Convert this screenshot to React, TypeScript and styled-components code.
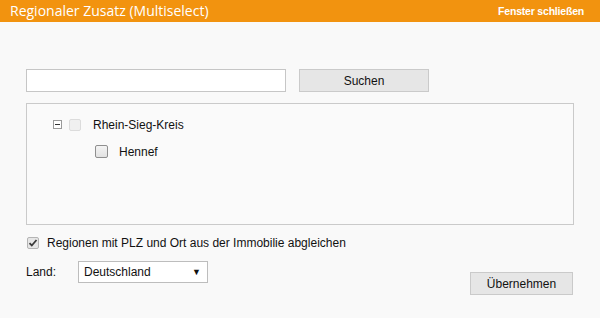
import React from "react";
import styled, { createGlobalStyle } from "styled-components";

const Global = createGlobalStyle`
  html, body { margin: 0; padding: 0; background: #f9f9f9; }
  body { font-family: "Liberation Sans", Arial, sans-serif; font-size: 12px; color: #111; }
`;

const Page = styled.div`
  width: 600px;
  height: 318px;
  background: #f9f9f9;
  display: flex;
  flex-direction: column;
`;

const Header = styled.div`
  height: 22px;
  background: #f2930f;
  display: flex;
  align-items: center;
  justify-content: space-between;
  padding: 0 16px 0 10px;
`;

const Title = styled.div`
  font-family: "Open Sans", sans-serif;
  font-size: 14px;
  color: #fff;
  line-height: 22px;
  margin-top: -1px;
`;

const Close = styled.div`
  font-family: "Liberation Sans", Arial, sans-serif;
  font-size: 10.5px;
  font-weight: bold;
  color: #fff;
  letter-spacing: -0.2px;
`;

const Body = styled.div`
  padding: 47px 27px 0 26px;
  display: flex;
  flex-direction: column;
`;

const SearchRow = styled.div`
  display: flex;
  gap: 13px;
  height: 23px;
`;

const TextInput = styled.div`
  width: 258px;
  height: 21px;
  background: #fff;
  border: 1px solid #c6c6c6;
`;

const Button = styled.div<{ $w: number }>`
  width: ${(p) => p.$w}px;
  height: 21px;
  box-sizing: content-box;
  background: #e6e6e6;
  border: 1px solid #cacaca;
  display: flex;
  align-items: center;
  justify-content: center;
  font-size: 12px;
  color: #111;
`;

const TreeBox = styled.div`
  margin-top: 11px;
  height: 108px;
  border: 1px solid #cacaca;
  background: #fafafa;
  padding: 12px 0 0 26px;
  box-sizing: content-box;
  width: 520px;
  display: flex;
  flex-direction: column;
  gap: 10px;
`;

const TreeRow = styled.div<{ $indent: number }>`
  display: flex;
  align-items: center;
  height: 17px;
  padding-left: ${(p) => p.$indent}px;
`;

const Toggle = styled.span`
  width: 7px;
  height: 7px;
  border: 1px solid #9a9a9a;
  background: #fff;
  position: relative;
  margin-right: 7px;
  &::after {
    content: "";
    position: absolute;
    left: 1px;
    top: 3px;
    width: 5px;
    height: 1px;
    background: #333;
  }
`;

const Box = styled.span<{ $variant: "disabled" | "normal" | "checked"; $size: number }>`
  width: ${(p) => p.$size}px;
  height: ${(p) => p.$size}px;
  box-sizing: border-box;
  border: 1px solid
    ${(p) => (p.$variant === "disabled" ? "#dcdcdc" : p.$variant === "checked" ? "#b4b4b4" : "#8f8f8f")};
  border-radius: 2px;
  background: ${(p) =>
    p.$variant === "disabled"
      ? "#f0f0f0"
      : p.$variant === "checked"
      ? "#e6e6e6"
      : "linear-gradient(#f4f4f4, #e2e2e2)"};
  display: inline-flex;
  align-items: center;
  justify-content: center;
  flex-shrink: 0;
`;

const Label = styled.span<{ $gap: number }>`
  margin-left: ${(p) => p.$gap}px;
  font-size: 12px;
  color: #111;
`;

const CheckRow = styled.div`
  margin-top: 11px;
  height: 14px;
  display: flex;
  align-items: center;
  padding-left: 1px;
`;

const BottomRow = styled.div`
  margin-top: 11px;
  display: flex;
  align-items: flex-start;
`;

const LandLabel = styled.div`
  width: 52px;
  padding-top: 4px;
  font-size: 12px;
`;

const Select = styled.div`
  height: 20px;
  border: 1px solid #bdbdbd;
  background: #fff;
  display: flex;
  align-items: center;
  justify-content: space-between;
  padding: 0 6px 0 5px;
  box-sizing: content-box;
  width: 117px;
  font-size: 12px;
`;

const Arrow = styled.span`
  font-size: 9px;
  color: #111;
`;

const Spacer = styled.div`
  flex: 1;
`;

const SubmitWrap = styled.div`
  margin-top: 11px;
`;

export default function App() {
  return (
    <>
      <Global />
      <Page>
        <Header>
          <Title>Regionaler Zusatz (Multiselect)</Title>
          <Close>Fenster schließen</Close>
        </Header>
        <Body>
          <SearchRow>
            <TextInput />
            <Button $w={128}>Suchen</Button>
          </SearchRow>
          <TreeBox>
            <TreeRow $indent={0}>
              <Toggle />
              <Box $size={12} $variant="disabled" />
              <Label $gap={12}>Rhein-Sieg-Kreis</Label>
            </TreeRow>
            <TreeRow $indent={42}>
              <Box $size={13} $variant="normal" />
              <Label $gap={11}>Hennef</Label>
            </TreeRow>
          </TreeBox>
          <CheckRow>
            <Box $size={12} $variant="checked">
              <svg width="10" height="10" viewBox="0 0 10 10">
                <path d="M1.5 5.2 L3.8 7.5 L8.5 2" fill="none" stroke="#3a3a3a" strokeWidth="1.8" />
              </svg>
            </Box>
            <Label $gap={8}>Regionen mit PLZ und Ort aus der Immobilie abgleichen</Label>
          </CheckRow>
          <BottomRow>
            <LandLabel>Land:</LandLabel>
            <Select>
              <span>Deutschland</span>
              <Arrow>▼</Arrow>
            </Select>
            <Spacer />
            <SubmitWrap>
              <Button $w={101}>Übernehmen</Button>
            </SubmitWrap>
          </BottomRow>
        </Body>
      </Page>
    </>
  );
}
